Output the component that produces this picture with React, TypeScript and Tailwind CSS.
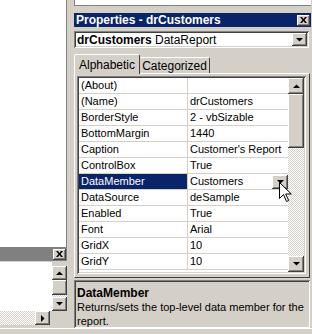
import React from 'react'

const ROWS: [string, string][] = [
  ['(About)', ''],
  ['(Name)', 'drCustomers'],
  ['BorderStyle', '2 - vbSizable'],
  ['BottomMargin', '1440'],
  ['Caption', "Customer's Report"],
  ['ControlBox', 'True'],
  ['DataMember', 'Customers'],
  ['DataSource', 'deSample'],
  ['Enabled', 'True'],
  ['Font', 'Arial'],
  ['GridX', '10'],
  ['GridY', '10'],
]

const raised =
  'shadow-[inset_-1px_-1px_#404040,inset_1px_1px_#ffffff,inset_-2px_-2px_#808080,inset_2px_2px_#d4d0c8]'
const sunken =
  'shadow-[inset_1px_1px_#808080,inset_-1px_-1px_#ffffff,inset_2px_2px_#404040,inset_-2px_-2px_#d4d0c8]'
const checker = 'bg-[repeating-conic-gradient(#ffffff_0_25%,#d4d0c8_0_50%)] bg-[length:2px_2px]'

function Arrow({ dir }: { dir: 'up' | 'down' | 'right' }) {
  const pts = dir === 'up' ? '0,4 7,4 3.5,0.5' : dir === 'down' ? '0,0 7,0 3.5,3.5' : '0,0 0,7 3.5,3.5'
  const w = dir === 'right' ? 4 : 7
  const h = dir === 'right' ? 7 : 4
  return (
    <svg width={w} height={h} viewBox={`0 0 ${w} ${h}`}>
      <polygon points={pts} fill="#000" />
    </svg>
  )
}

function Btn({ dir, className }: { dir: 'up' | 'down' | 'right'; className: string }) {
  return (
    <div className={`bg-[#d4d0c8] flex items-center justify-center ${raised} ${className}`}>
      <Arrow dir={dir} />
    </div>
  )
}

function CloseBtn() {
  return (
    <div className={`w-[13px] h-[11px] bg-[#d4d0c8] flex items-center justify-center ${raised}`}>
      <svg width="7" height="6" viewBox="0 0 7 6">
        <path d="M0 0h2l1.5 2 1.5-2h2L4.5 3 7 6H5L3.5 4 2 6H0l2.5-3z" fill="#000" />
      </svg>
    </div>
  )
}

export default function App() {
  return (
    <div className="relative w-[312px] h-[334px] bg-[#d4d0c8] overflow-hidden font-['Liberation_Sans',Arial,sans-serif] text-[11px] leading-none text-black flex flex-col">
      <div className="flex h-[328px]">
        {/* left: code window + inactive window */}
        <div className="w-[67px] flex flex-col">
          <div className="h-[248px] bg-white border-r border-[#808080]" />
          <div className="h-[14px] bg-[#808080] flex items-center justify-end pr-[1px]">
            <CloseBtn />
          </div>
          <div className="flex-1 flex flex-col pt-[1px]">
            <div className="flex flex-1">
              <div className="flex-1 bg-white" />
              <div className="w-[15px] flex flex-col">
                <Btn dir="up" className="h-[14px] mt-[4px]" />
                <div className={`h-[15px] bg-[#d4d0c8] ${raised}`} />
                <div className={`h-[2px] ${checker}`} />
                <Btn dir="down" className="h-[14px]" />
              </div>
            </div>
            <div className="flex h-[14px]">
              <div className={`w-[35px] ${checker}`} />
              <Btn dir="right" className="w-[15px]" />
              <div className="flex-1 bg-[#d4d0c8]" />
            </div>
            <div className="h-[3px]" />
          </div>
        </div>

        {/* right: properties window */}
        <div className="ml-[7px] w-[237px] flex flex-col">
          <div className="h-[6px] bg-white border-l border-b border-[#808080]" />
          <div className="mt-[7px] h-[14px] bg-[#0a246a] flex items-center justify-between pl-[2px] pr-[1px]">
            <span className="text-white font-bold text-[12px]">Properties - drCustomers</span>
            <CloseBtn />
          </div>
          <div className={`mt-[4px] h-[17px] bg-white flex items-center justify-between pl-[3px] pr-[2px] mr-[2px] ${sunken}`}>
            <span className="text-[12px]">
              <span className="font-bold">drCustomers</span> DataReport
            </span>
            <Btn dir="down" className="w-[15px] h-[13px]" />
          </div>
          <div className="mt-[5px] flex items-end h-[20px] pl-[0px]">
            <div className="h-[20px] w-[66px] bg-[#d4d0c8] border-t border-l border-white border-r border-r-[#404040] rounded-t-[2px] flex items-center justify-center text-[12px] relative z-10 -mb-[1px]">
              Alphabetic
            </div>
            <div className="h-[16px] w-[70px] bg-[#d4d0c8] border-t border-white border-r border-r-[#404040] rounded-t-[2px] flex items-center justify-center text-[12px]">
              Categorized
            </div>
          </div>
          <div className="h-[205px] border-t border-l border-white border-r border-b border-r-[#404040] border-b-[#404040] p-[2px] pr-[3px] mr-[1px]">
            <div className={`h-[198px] p-[2px] flex bg-white ${sunken}`}>
              <div className="flex-1 flex flex-col overflow-hidden">
                {ROWS.map(([name, value]) => {
                  const sel = name === 'DataMember'
                  return (
                    <div key={name} className="flex h-[16px] shrink-0 border-b border-[#d4d0c8]">
                      <div
                        className={`w-[109px] border-r border-[#d4d0c8] pl-[2px] flex items-center ${
                          sel ? 'bg-[#0a246a] text-white' : ''
                        }`}
                      >
                        {name}
                      </div>
                      <div className="flex-1 pl-[2px] flex items-center justify-between">
                        <span>{value}</span>
                        {sel && <Btn dir="down" className="w-[16px] h-[14px]" />}
                      </div>
                    </div>
                  )
                })}
              </div>
              <div className="w-[16px] flex flex-col">
                <Btn dir="up" className="h-[16px]" />
                <div className={`h-[54px] bg-[#d4d0c8] ${raised}`} />
                <div className={`flex-1 ${checker}`} />
                <Btn dir="down" className="h-[16px]" />
              </div>
            </div>
          </div>
          <div className={`mt-[2px] flex-1 mr-[1px] px-[3px] pt-[6px] leading-[14px] ${sunken}`}>
            <div className="font-bold text-[12px]">DataMember</div>
            <div>Returns/sets the top-level data member for the report.</div>
          </div>
        </div>
      </div>
      <div className="flex-1 border-t border-white" />

      {/* mouse pointer */}
      <svg className="absolute left-[279px] top-[182px]" width="13" height="21" viewBox="0 0 13 21">
        <path d="M0.5 0.5v16l4-4 3 7 2.2-1-3-6.5h5.6z" fill="#fff" stroke="#000" strokeWidth="1" />
      </svg>
    </div>
  )
}
